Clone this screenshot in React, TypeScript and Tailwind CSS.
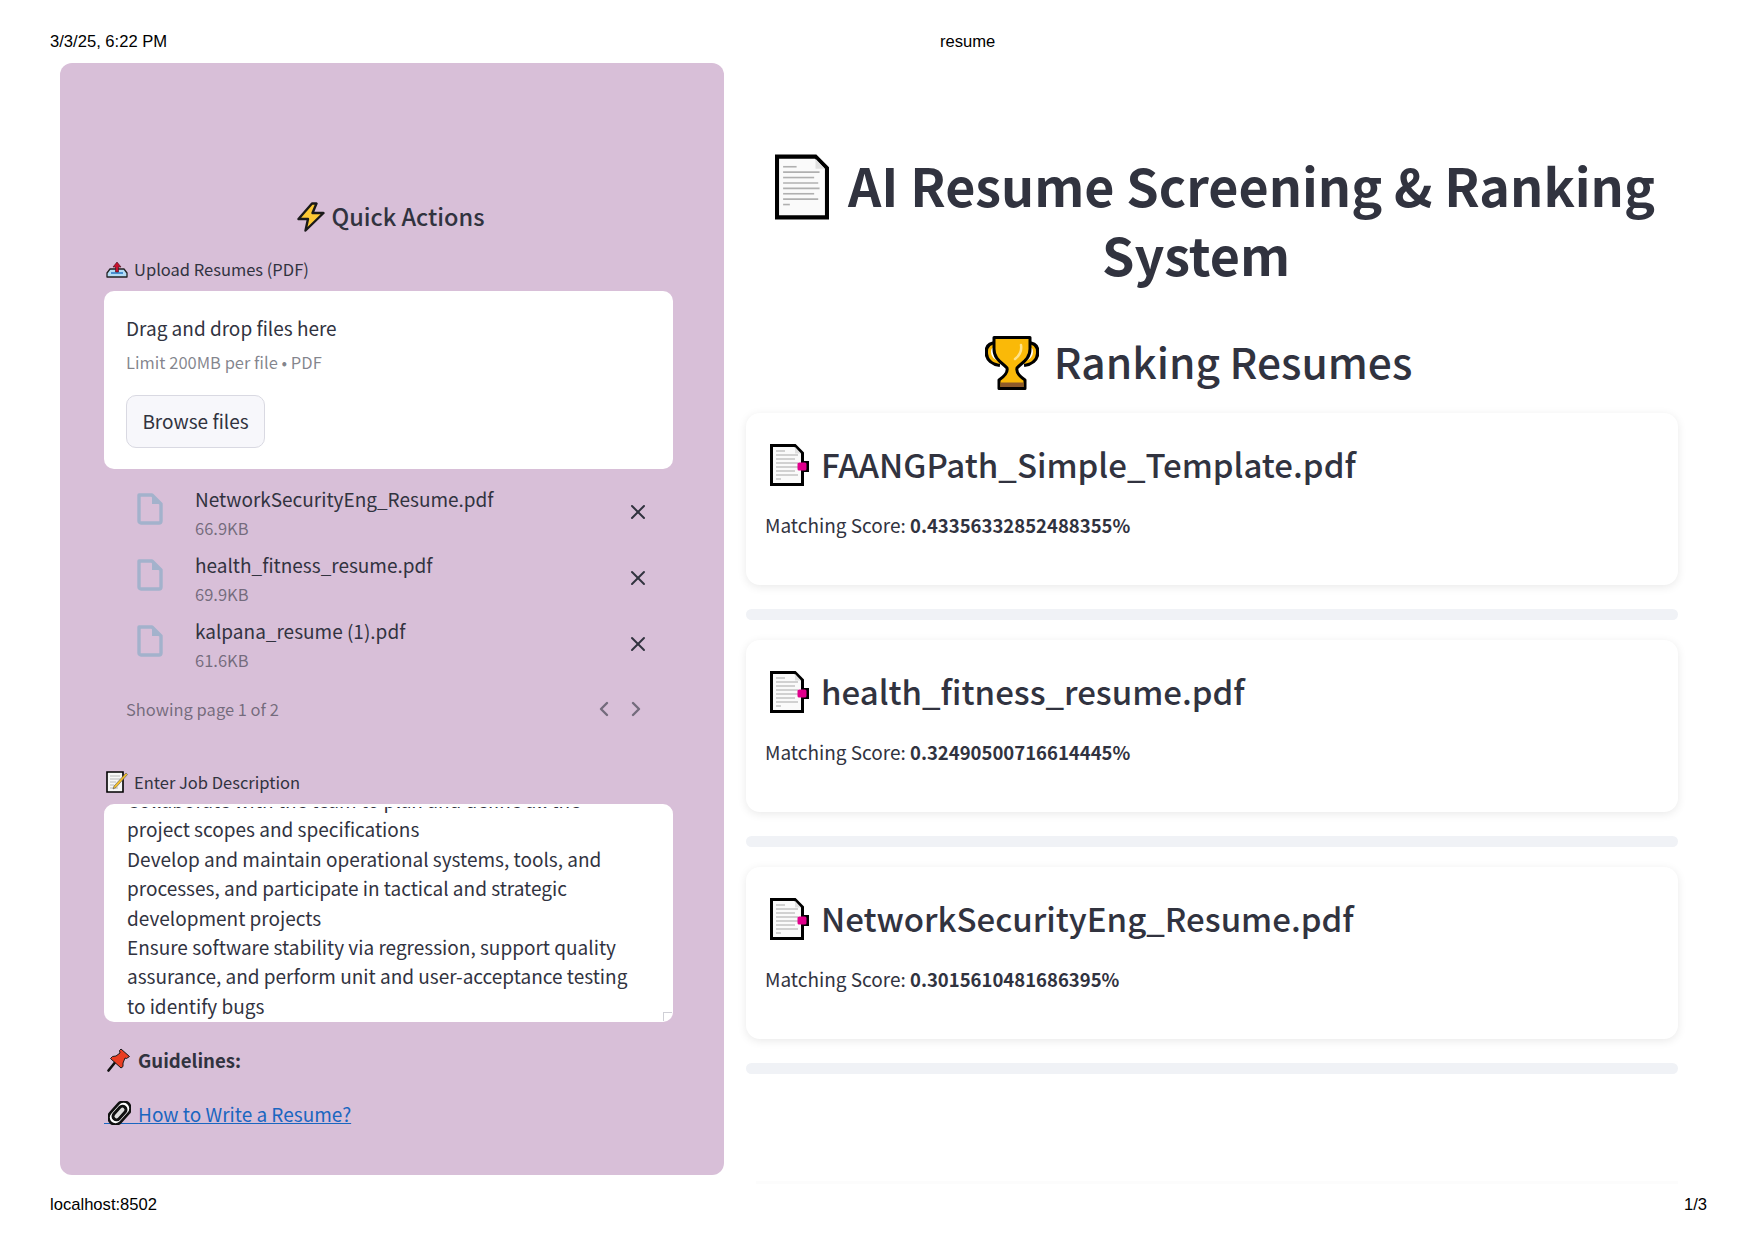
import React from 'react';
import { X, ChevronLeft, ChevronRight } from 'lucide-react';

const uiFont = 'font-["Noto_Sans_CJK_JP","Noto_Sans",sans-serif]';

const files = [
  { name: 'NetworkSecurityEng_Resume.pdf', size: '66.9KB' },
  { name: 'health_fitness_resume.pdf', size: '69.9KB' },
  { name: 'kalpana_resume (1).pdf', size: '61.6KB' },
];

const results = [
  { name: 'FAANGPath_Simple_Template.pdf', score: '0.43356332852488355%' },
  { name: 'health_fitness_resume.pdf', score: '0.32490500716614445%' },
  { name: 'NetworkSecurityEng_Resume.pdf', score: '0.3015610481686395%' },
];

const PageIcon = () => (
  <svg viewBox="0 0 40 48" className="mt-[4px] h-[66px] w-[54px] shrink-0">
    <path d="M1.5 1.5H30L38.5 10V46.5H1.5Z" fill="#fafafa" stroke="#000" strokeWidth="3" />
    <path d="M30 3V10.5H37Z" fill="#e0e0e0" />
    <g stroke="#b0b0b0" strokeWidth="1.2">
      <path d="M6 9H16" />
      <path d="M6 13H33" />
      <path d="M6 17H29" />
      <path d="M6 21H32" />
      <path d="M6 25H33" />
      <path d="M6 29H29" />
      <path d="M6 33H32" />
      <path d="M6 37H11" />
    </g>
  </svg>
);

const TabPageIcon = () => (
  <svg viewBox="0 0 39 42" className="ml-[5px] h-[42px] w-[39px] shrink-0">
    <path d="M1.5 1.5H25L32.5 9V40.5H1.5Z" fill="#fafafa" stroke="#000" strokeWidth="3" />
    <path d="M25 3V9.5H31Z" fill="#e0e0e0" />
    <g stroke="#b0b0b0" strokeWidth="1.1">
      <path d="M6 7H15" />
      <path d="M6 11H28" />
      <path d="M6 15H25" />
      <path d="M6 19H28" />
      <path d="M6 23H28" />
      <path d="M6 27H25" />
      <path d="M6 31H28" />
      <path d="M6 35H11" />
    </g>
    <rect x="31" y="17" width="8" height="11" fill="#000" />
    <rect x="27.5" y="18.5" width="9" height="8" rx="1.5" fill="#e0008c" />
  </svg>
);

const BoltIcon = () => (
  <svg viewBox="0 0 28 30" className="h-[30px] w-[28px] shrink-0">
    <path d="M15 1.5 1.5 17H11L8.5 28.5 26.5 11H15.5L19.5 1.5Z" fill="#fcc934" stroke="#1a1a1a" strokeWidth="2.4" strokeLinejoin="round" />
  </svg>
);

const TrayIcon = () => (
  <svg viewBox="0 0 22 17" className="h-[17px] w-[22px] shrink-0">
    <path d="M4 8H18L21 12V16H1V12Z" fill="#b3dcf5" stroke="#222" strokeWidth="1.3" strokeLinejoin="round" />
    <path d="M5 12H17" stroke="#4a90d0" strokeWidth="2" />
    <path d="M11 1 15 6H12.5V11H9.5V6H7Z" fill="#c8102e" stroke="#3a1018" strokeWidth="0.6" />
  </svg>
);

const MemoIcon = () => (
  <svg viewBox="0 0 22 22" className="h-[22px] w-[22px] shrink-0">
    <path d="M1 1H17V21H1Z" fill="#f7f7f7" stroke="#000" strokeWidth="1.6" />
    <g stroke="#aaa" strokeWidth="0.8">
      <path d="M4 5H14" />
      <path d="M4 8H14" />
      <path d="M4 11H10" />
      <path d="M4 14H8" />
      <path d="M4 17H12" />
    </g>
    <path d="M20 2 21.5 3.5 10 16.5 7 18 8 15Z" fill="#f5c02c" stroke="#555" strokeWidth="0.6" />
  </svg>
);

const PinIcon = () => (
  <svg viewBox="0 0 23 24" className="h-[24px] w-[23px] shrink-0">
    <path d="M1.5 22.5 8 14.5" stroke="#111" strokeWidth="2.6" strokeLinecap="round" />
    <path d="M14 1 22.5 8.5 19.5 10.5 18 10 16 15 16 18.5 14 20 3.5 10.5 5.5 8.5 9 8 13 5 12.5 2.5Z" fill="#ea3d22" stroke="#1a1a1a" strokeWidth="1" strokeLinejoin="round" />
  </svg>
);

const ClipIcon = () => (
  <svg viewBox="0 0 23 24" className="absolute top-[1px] left-[4px] h-[24px] w-[23px]">
    <g transform="rotate(42 11.5 12)">
      <rect x="4.5" y="-1" width="14" height="26" rx="7" fill="#fff" stroke="#111" strokeWidth="2.6" />
      <rect x="8" y="4" width="7" height="16" rx="3.5" fill="#ddd" stroke="#111" strokeWidth="3" />
    </g>
  </svg>
);

const TrophyIcon = () => (
  <svg viewBox="0 0 54 54" className="mt-[3px] h-[54px] w-[54px] shrink-0">
    <path d="M12 7C4 7 1.5 11 1.5 16 1.5 24 8 28 15 29M42 7C50 7 52.5 11 52.5 16 52.5 24 46 28 39 29" fill="none" stroke="#000" strokeWidth="4" />
    <path d="M12 9.5C6 9.5 4.5 12 4.5 16 4.5 22 9 25.5 15 26.5M42 9.5C48 9.5 49.5 12 49.5 16 49.5 22 45 25.5 39 26.5" fill="none" stroke="#fab908" strokeWidth="3" />
    <path d="M9 1.5H45V13C45 24 36 27 32 32 31 36 34 40 40 44V52.5H14V44C20 40 23 36 22 32 18 27 9 24 9 13Z" fill="#fab908" stroke="#000" strokeWidth="3" strokeLinejoin="round" />
    <path d="M15.5 46.5H38.5V51H15.5Z" fill="#8d5a2b" />
    <path d="M36 9C37 15 34 20 30 23" fill="none" stroke="#ffe38a" strokeWidth="2.5" strokeLinecap="round" />
  </svg>
);

const FileGlyph = () => (
  <svg viewBox="0 0 26 32" className="mt-[9px] ml-[33px] h-[32px] w-[26px] shrink-0">
    <path d="M2 2H15L24 11V28A2 2 0 0 1 22 30H4A2 2 0 0 1 2 28Z" fill="none" stroke="#a3b2cc" strokeWidth="3.4" strokeLinejoin="round" />
    <path d="M15 2V11H24Z" fill="#a3b2cc" />
  </svg>
);

const FileRow = ({ name, size }: { name: string; size: string }) => (
  <div className="flex h-[66px]">
    <FileGlyph />
    <div className="ml-[32px] flex-1">
      <div className="flex h-[30px] items-center text-[19px] text-[#31333f]">{name}</div>
      <div className="flex h-[28px] items-center text-[16.5px] text-[#31333f]/60">{size}</div>
    </div>
    <X size={24} strokeWidth={2} className="mt-4 mr-[23px] text-[#31333f]" />
  </div>
);

const ResultCard = ({ name, score }: { name: string; score: string }) => (
  <div>
    <div className="h-[172px] rounded-[14px] bg-white px-[19px] pt-[30px] shadow-[0_2px_10px_rgba(0,0,0,0.09)]">
      <div className="flex h-[44px] items-center">
        <TabPageIcon />
        <span className="ml-[12px] text-[33px] font-medium text-[#31333f]">{name}</span>
      </div>
      <p className="mt-[24px] h-[28px] text-[19px] leading-[28px] text-[#31333f]">
        Matching Score: <strong className="text-[18.5px] font-semibold">{score}</strong>
      </p>
    </div>
    <div className="mt-[24px] mb-[20px] h-[11px] rounded-md bg-[#f0f2f6]" />
  </div>
);

export default function App() {
  return (
    <div className={`flex h-[1241px] w-[1755px] flex-col bg-white ${uiFont}`}>
      {/* Print header */}
      <div className='flex h-[63px] items-end pb-[8px] pl-[50px] font-["Liberation_Sans",sans-serif] text-[16.6px] text-black'>
        <span className="w-[890px]">3/3/25, 6:22 PM</span>
        <span>resume</span>
      </div>

      <div className="flex h-[1112px]">
        {/* Sidebar */}
        <aside className="ml-[60px] w-[664px] rounded-[12px] bg-[#d8bfd8] pt-[136px] pl-[44px]">
          <div className="flex h-[36px] w-[573px] items-center justify-center gap-[7px] text-[23.5px] font-medium text-[#31333f]">
            <BoltIcon />
            <span>Quick Actions</span>
          </div>

          <div className="mt-[22px] flex h-[24px] items-center gap-[6px] pl-[2px] text-[16.5px] text-[#31333f]">
            <TrayIcon />
            <span>Upload Resumes (PDF)</span>
          </div>

          <div className="mt-[10px] h-[178px] w-[569px] rounded-[10px] bg-white px-[22px] pt-[21px]">
            <div className="flex h-[32px] items-center text-[19px] text-[#31333f]">Drag and drop files here</div>
            <div className="flex h-[36px] items-center text-[16.5px] text-[#31333f]/60">Limit 200MB per file • PDF</div>
            <button className="mt-[15px] h-[53px] w-[139px] rounded-[10px] border border-[#d9d9e2] bg-[#f7f7fb] text-[19px] text-[#31333f]">
              Browse files
            </button>
          </div>

          <div className="mt-[15px] w-[569px]">
            {files.map((f) => (
              <FileRow key={f.name} name={f.name} size={f.size} />
            ))}
          </div>

          <div className="mt-[15px] flex h-[24px] w-[569px] items-center pl-[22px] text-[16.5px] text-[#31333f]/60">
            <span className="flex-1">Showing page 1 of 2</span>
            <ChevronLeft size={24} strokeWidth={2.4} className="mr-[8px] text-[#31333f]/60" />
            <ChevronRight size={24} strokeWidth={2.4} className="mr-[25px] text-[#31333f]/60" />
          </div>

          <div className="mt-[49px] flex h-[24px] items-center gap-[6px] pl-[2px] text-[16.5px] text-[#31333f]">
            <MemoIcon />
            <span>Enter Job Description</span>
          </div>

          <div className="relative mt-[10px] h-[218px] w-[569px] overflow-hidden rounded-[10px] border-t-[3px] border-white bg-white pl-[23px] pr-[30px] text-[19px] leading-[29.4px] text-[#31333f]">
            <div className="-mt-[22px]">
              <div>Collaborate with the team to plan and define all the</div>
              <div>project scopes and specifications</div>
              <div>Develop and maintain operational systems, tools, and</div>
              <div>processes, and participate in tactical and strategic</div>
              <div>development projects</div>
              <div>Ensure software stability via regression, support quality</div>
              <div>assurance, and perform unit and user-acceptance testing</div>
              <div>to identify bugs</div>
            </div>
            <span className="absolute right-[1px] bottom-[1px] h-[9px] w-[9px] border-t border-l border-[#cfcfd6]" />
          </div>

          <div className="mt-[24px] flex h-[28px] items-center gap-[8px] pl-[3px] text-[18.6px] font-semibold text-[#31333f]">
            <PinIcon />
            <span>Guidelines:</span>
          </div>

          <a href="#" className="relative mt-[26px] block h-[28px] w-fit text-[19px] leading-[28px] text-[#1a66c0] underline">
            <ClipIcon />
            {'\u00a0\u00a0\u00a0\u00a0\u00a0\u00a0\u00a0\u00a0'}How to Write a Resume?
          </a>
        </aside>

        {/* Results */}
        <main className="ml-[22px] w-[932px] pt-[87px]">
          <h1 className="flex h-[70px] items-center justify-center gap-[19px] pl-[6px] text-[52px] font-bold whitespace-nowrap text-[#31333f]">
            <PageIcon />
            <span>AI Resume Screening &amp; Ranking</span>
          </h1>
          <div className="-mt-[1px] flex h-[70px] items-center justify-center pr-[32px] text-[52px] font-bold text-[#31333f]">System</div>

          <h2 className="mt-[42px] flex h-[60px] items-center justify-center gap-[15px] pr-[27px] text-[42.5px] font-medium text-[#31333f]">
            <TrophyIcon />
            <span>Ranking Resumes</span>
          </h2>

          <div className="mt-[22px]">
            {results.map((r) => (
              <ResultCard key={r.name} name={r.name} score={r.score} />
            ))}
          </div>
          <div className="mt-[107px] ml-[10px] h-[3px] bg-[#fcfcfc]" />
        </main>
      </div>

      {/* Print footer */}
      <div className='flex flex-1 items-start justify-between pt-[18px] pr-[48px] pl-[50px] font-["Liberation_Sans",sans-serif] text-[16.6px] text-black'>
        <span>localhost:8502</span>
        <span>1/3</span>
      </div>
    </div>
  );
}
